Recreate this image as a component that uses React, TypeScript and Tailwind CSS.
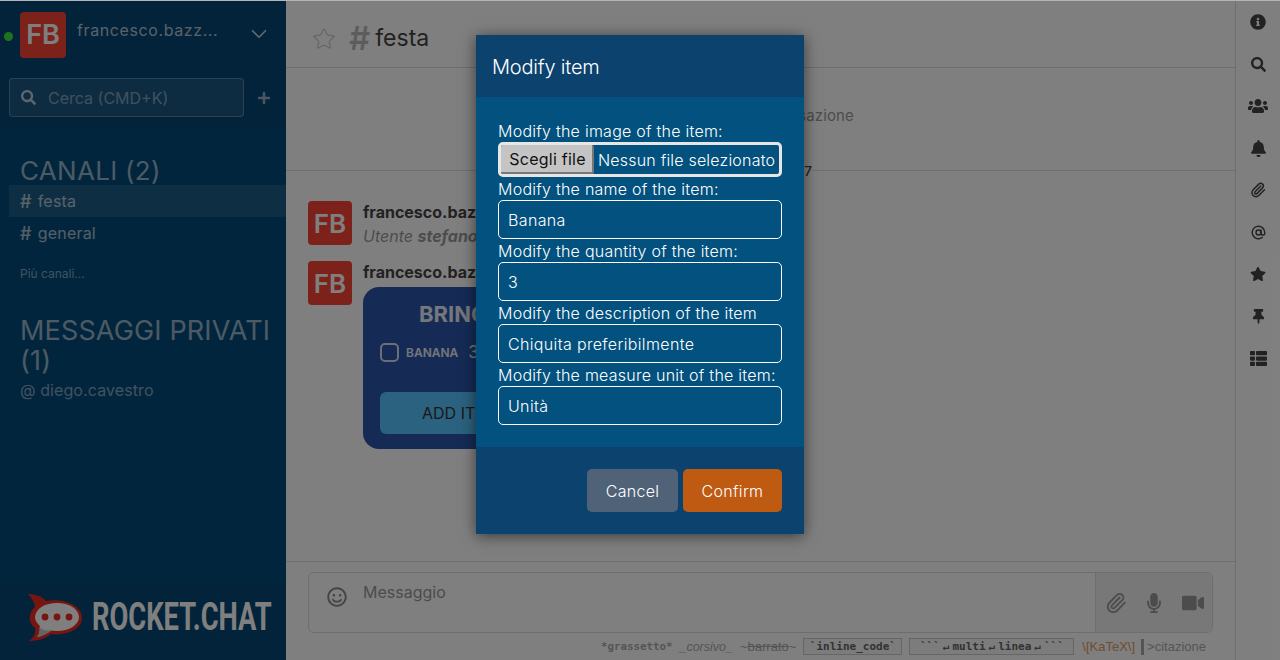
import React from 'react'
import { ChevronDown, Star, Paperclip, AtSign } from 'lucide-react'
import {
  FaInfoCircle,
  FaSearch,
  FaUsers,
  FaBell,
  FaStar,
  FaThumbtack,
  FaThList,
  FaPlus,
  FaMicrophone,
  FaVideo,
  FaRegSmile,
} from 'react-icons/fa'

const Logo = () => (
  <svg width="58" height="50" viewBox="0 0 58 50">
    <path
      d="M1 1 C8 1 15 3 19 8 C36 5 55 12 55 25 C55 37 38 43 24 41 C18 46 10 48 2 48 C7 44 9 40 8 35 C1 30 1 20 8 14 C7 9 5 5 1 1 Z"
      fill="#ee2a22"
    />
    <ellipse cx="30" cy="24" rx="22" ry="14" fill="#ffffff" />
    <path d="M12 30 C14 36 13 41 10 44 C16 43 21 40 25 37 Z" fill="#ffffff" />
    <path d="M12 34 C13 38 12 41 10 44 C16 43 21 40 25 37 C20 38 15 37 12 34 Z" fill="#c9c9c9" />
    <circle cx="18" cy="24" r="3.4" fill="#ee2a22" />
    <circle cx="30" cy="24" r="3.4" fill="#ee2a22" />
    <circle cx="42" cy="24" r="3.4" fill="#ee2a22" />
  </svg>
)

const Avatar = ({ big }: { big?: boolean }) => (
  <div
    className={
      big
        ? 'flex h-[46px] w-[46px] shrink-0 items-center justify-center rounded-[4px] bg-[#f84434] text-[27px] font-semibold text-white'
        : 'flex h-[44px] w-[44px] shrink-0 items-center justify-center rounded-[4px] bg-[#f84434] text-[26px] font-semibold text-white'
    }
  >
    FB
  </div>
)

const Sidebar = () => (
  <aside className="flex h-full w-[286px] shrink-0 flex-col bg-[#044a7c]">
    <div className="h-[128px] shrink-0 bg-[#044675]">
      <div className="flex h-[78px] items-start pt-3">
        <span className="ml-1 mt-5 h-[9px] w-[9px] rounded-full bg-[#3ee63e]" />
        <div className="ml-[7px]">
          <Avatar big />
        </div>
        <span className="ml-[11px] mt-[7px] w-[144px] truncate text-[16px] leading-[22px] tracking-[0.6px] text-white/70">
          francesco.bazz...
        </span>
        <ChevronDown size={26} strokeWidth={1.6} className="ml-[25px] mt-[9px] text-white/75" />
      </div>
      <div className="flex items-center pl-[9px]">
        <div className="flex h-[39px] w-[235px] items-center rounded-[4px] border border-white/25 bg-white/10 pl-[11px] text-white/45">
          <FaSearch size={15} className="text-white/70" />
          <span className="ml-[12px] text-[16px]">Cerca (CMD+K)</span>
        </div>
        <FaPlus size={14} className="ml-[13px] text-white/55" />
      </div>
    </div>
    <nav className="flex flex-1 flex-col pl-[9px]">
      <h2 className="ml-[11px] mt-[27px] h-[30px] text-[26px] leading-[32px] tracking-[0.3px] text-white/60">CANALI (2)</h2>
      <div className="flex h-[32px] items-center bg-white/10 pl-[11px] text-[16px] tracking-[0.2px] text-white/65">
        <span className="mr-[6px] text-[18px] font-medium">#</span>festa
      </div>
      <div className="flex h-[32px] items-center pl-[11px] text-[16px] tracking-[0.2px] text-white/65">
        <span className="mr-[6px] text-[18px] font-medium">#</span>general
      </div>
      <span className="ml-[11px] mt-[17px] text-[12px] leading-[16px] text-white/50">Più canali...</span>
      <h2 className="ml-[11px] mt-[34px] text-[27px] leading-[30px] tracking-[0.15px] text-white/60">
        MESSAGGI PRIVATI
        <br />
        (1)
      </h2>
      <span className="ml-[11px] mt-[3px] text-[16px] leading-[22px] tracking-[0.1px] text-white/50">@ diego.cavestro</span>
    </nav>
    <div className="flex h-[77px] shrink-0 items-start bg-[#044675] pl-[27px] pt-[10px]">
      <Logo />
      <span className="ml-[7px] mt-[3px] inline-block w-[178px] origin-left scale-x-[0.7] whitespace-nowrap font-['Roboto'] text-[39px] leading-[42px] font-bold text-white">
        ROCKET.CHAT
      </span>
    </div>
  </aside>
)

const Messages = () => (
  <div className="flex flex-1 flex-col pl-[22px]">
    <div className="-mt-[10px] mb-[20px] flex h-[20px] items-center justify-center">
      <span className="bg-white text-[13.5px] leading-[20px] font-medium text-[#444]">Nov 13, 2017</span>
    </div>
    <div className="flex">
      <Avatar />
      <div className="ml-[11px]">
        <p className="text-[16px] leading-[22px] font-bold text-[#444]">francesco.bazzani</p>
        <p className="mt-[2px] text-[16px] leading-[22px] whitespace-nowrap text-[#999] italic">
          Utente <b>stefano</b> aggiunto
        </p>
      </div>
    </div>
    <div className="mt-[14px] flex">
      <Avatar />
      <div className="ml-[11px]">
        <p className="text-[16px] leading-[22px] font-bold text-[#444]">francesco.bazzani</p>
        <div className="mt-[4px] h-[162px] w-[280px] rounded-[16px] bg-[#2a56ac] pl-[17px] pt-[13px]">
          <p className="ml-[39px] text-[22px] leading-[28px] font-bold whitespace-nowrap text-white/90">BRING IT LIST</p>
          <div className="mt-[12px] flex items-center">
            <span className="h-[19px] w-[19px] rounded-[5px] border-2 border-white/80" />
            <span className="ml-[7px] text-[12px] font-semibold text-white/90">BANANA</span>
            <span className="ml-[10px] text-[17px] text-white/90">3</span>
          </div>
          <div className="mt-[26px] flex h-[42px] w-[240px] items-center rounded-[6px] bg-[#56c4ff] pl-[42px] text-[16px] text-[#333]">
            ADD ITEM
          </div>
        </div>
      </div>
    </div>
  </div>
)

const Composer = () => (
  <div className="h-[99px] shrink-0 border-t border-[#ddd] px-[22px] pt-[10px]">
    <div className="flex h-[61px] w-[905px] rounded-[6px] border border-[#ddd]">
      <FaRegSmile size={20} className="ml-[18px] mt-[14px] text-[#888]" />
      <span className="ml-[16px] mt-[8px] flex-1 text-[16px] leading-[22px] text-[#999]">Messaggio</span>
      <div className="flex w-[117px] items-center rounded-r-[6px] border-l border-[#ddd] bg-[#f1f1f1] pl-[9px] text-[#999]">
        <Paperclip size={22} strokeWidth={2} />
        <FaMicrophone size={20} className="ml-[17px]" />
        <FaVideo size={22} className="ml-[18px]" />
      </div>
    </div>
    <div className="mr-[7px] mt-[5px] flex items-center justify-end whitespace-nowrap font-['Liberation_Sans'] text-[13px] leading-[16px] text-[#aaa]">
      <b className="font-['DejaVu_Sans_Mono'] text-[10.8px]">*grassetto*</b>
      <i className="ml-[7px] text-[12.5px] font-light">_corsivo_</i>
      <span className="ml-[7px]">
        ~<s>barrato</s>~
      </span>
      <code className="ml-[7px] w-[99px] border border-[#ccc] bg-[#f8f8f8] text-center font-['DejaVu_Sans_Mono'] text-[11px] leading-[15px] font-bold text-[#666]">
        `inline_code`
      </code>
      <code className="ml-[7px] flex w-[165px] justify-center gap-[3px] border border-[#ccc] bg-[#f8f8f8] font-['DejaVu_Sans_Mono'] text-[11px] leading-[15px] font-bold text-[#666]">
        <span>```</span>
        <span>↵</span>
        <span>multi</span>
        <span>↵</span>
        <span>linea</span>
        <span>↵</span>
        <span>```</span>
      </code>
      <span className="ml-[8px] text-[#e59866]">\[KaTeX\]</span>
      <span className="ml-[6px] h-[16px] w-[3px] bg-[#aaa]" />
      <span className="ml-[3px]">&gt;citazione</span>
    </div>
  </div>
)

const tabIcons = [
  <FaInfoCircle size={16} />,
  <FaSearch size={15} />,
  <FaUsers size={20} />,
  <FaBell size={17} />,
  <Paperclip size={16} strokeWidth={2.2} />,
  <AtSign size={15} strokeWidth={2.2} />,
  <FaStar size={16} />,
  <FaThumbtack size={15} />,
  <FaThList size={17} />,
]

const Field = ({ label, value }: { label: string; value: string }) => (
  <div>
    <label className="block h-[23px] text-[16px] leading-[25px] font-light tracking-[0.25px] text-white">{label}</label>
    <div className="flex h-[39px] items-center rounded-[5px] border border-white px-[9px] text-[16px] font-light tracking-[0.35px] text-white">
      {value}
    </div>
  </div>
)

const Modal = () => (
  <div className="flex h-[499px] w-[328px] flex-col bg-[#0b426e] shadow-[0_2px_14px_rgba(0,0,0,0.55)]">
    <div className="flex h-[62px] shrink-0 items-center pl-4 pt-[2px] text-[20px] font-light tracking-[-0.2px] text-white">
      Modify item
    </div>
    <div className="h-[350px] shrink-0 bg-[#02517e] px-[22px] pt-[23px]">
      <label className="block text-[16px] leading-[22px] font-light tracking-[0.25px] text-white">Modify the image of the item:</label>
      <div className="flex h-[35px] items-center rounded-[5px] border-[3px] border-[#e6e6e6]">
        <span className="flex h-full w-[93px] items-center justify-center rounded-[2px] border-b-2 border-r-2 border-[#777] bg-[#c4c4c4] pl-[2px] text-[16px] tracking-[0.25px] text-[#111]">
          Scegli file
        </span>
        <span className="ml-[4px] whitespace-nowrap text-[16px] font-light tracking-[0.2px] text-white">Nessun file selezionato</span>
      </div>
      <Field label="Modify the name of the item:" value="Banana" />
      <Field label="Modify the quantity of the item:" value="3" />
      <Field label="Modify the description of the item" value="Chiquita preferibilmente" />
      <Field label="Modify the measure unit of the item:" value="Unità" />
    </div>
    <div className="flex flex-1 items-start justify-end gap-[5px] pr-[22px] pt-[22px]">
      <button className="h-[43px] w-[91px] rounded-[5px] bg-[#4f6277] text-[16px] font-light tracking-[0.3px] text-white">Cancel</button>
      <button className="h-[43px] w-[99px] rounded-[5px] bg-[#bf5a12] text-[16px] font-light tracking-[0.3px] text-white">Confirm</button>
    </div>
  </div>
)

export default function App() {
  return (
    <div className="relative flex h-[660px] w-[1280px] overflow-hidden bg-white font-['Inter',sans-serif]">
      <Sidebar />
      <main className="flex min-w-0 flex-1 flex-col">
        <header className="flex h-[68px] shrink-0 items-center border-b border-[#ddd] pl-[26px] pt-[10px]">
          <Star size={24} strokeWidth={1.2} className="text-[#ccc]" />
          <span className="ml-[13px] text-[33px] leading-none font-semibold text-[#bbb]">#</span>
          <span className="ml-[5px] text-[23px] text-[#444]">festa</span>
        </header>
        <div className="flex h-[103px] shrink-0 justify-center border-b border-[#ddd] pt-[37px] text-[15px] leading-[22px] tracking-[0.15px] text-[#999]">
          Inizio della conversazione
        </div>
        <Messages />
        <Composer />
      </main>
      <div className="flex w-[45px] shrink-0 flex-col items-center border-l border-[#ddd] pt-[1px] text-[#444]">
        {tabIcons.map((icon, i) => (
          <div key={i} className="flex h-[42px] items-center justify-center">
            {icon}
          </div>
        ))}
      </div>
      {/* dim layer + dialog */}
      <div className="absolute inset-0 flex justify-center bg-black/50 pt-[35px]">
        <Modal />
      </div>
      <div className="absolute inset-x-0 top-0 h-px bg-[#b5b5b5]" />
    </div>
  )
}
